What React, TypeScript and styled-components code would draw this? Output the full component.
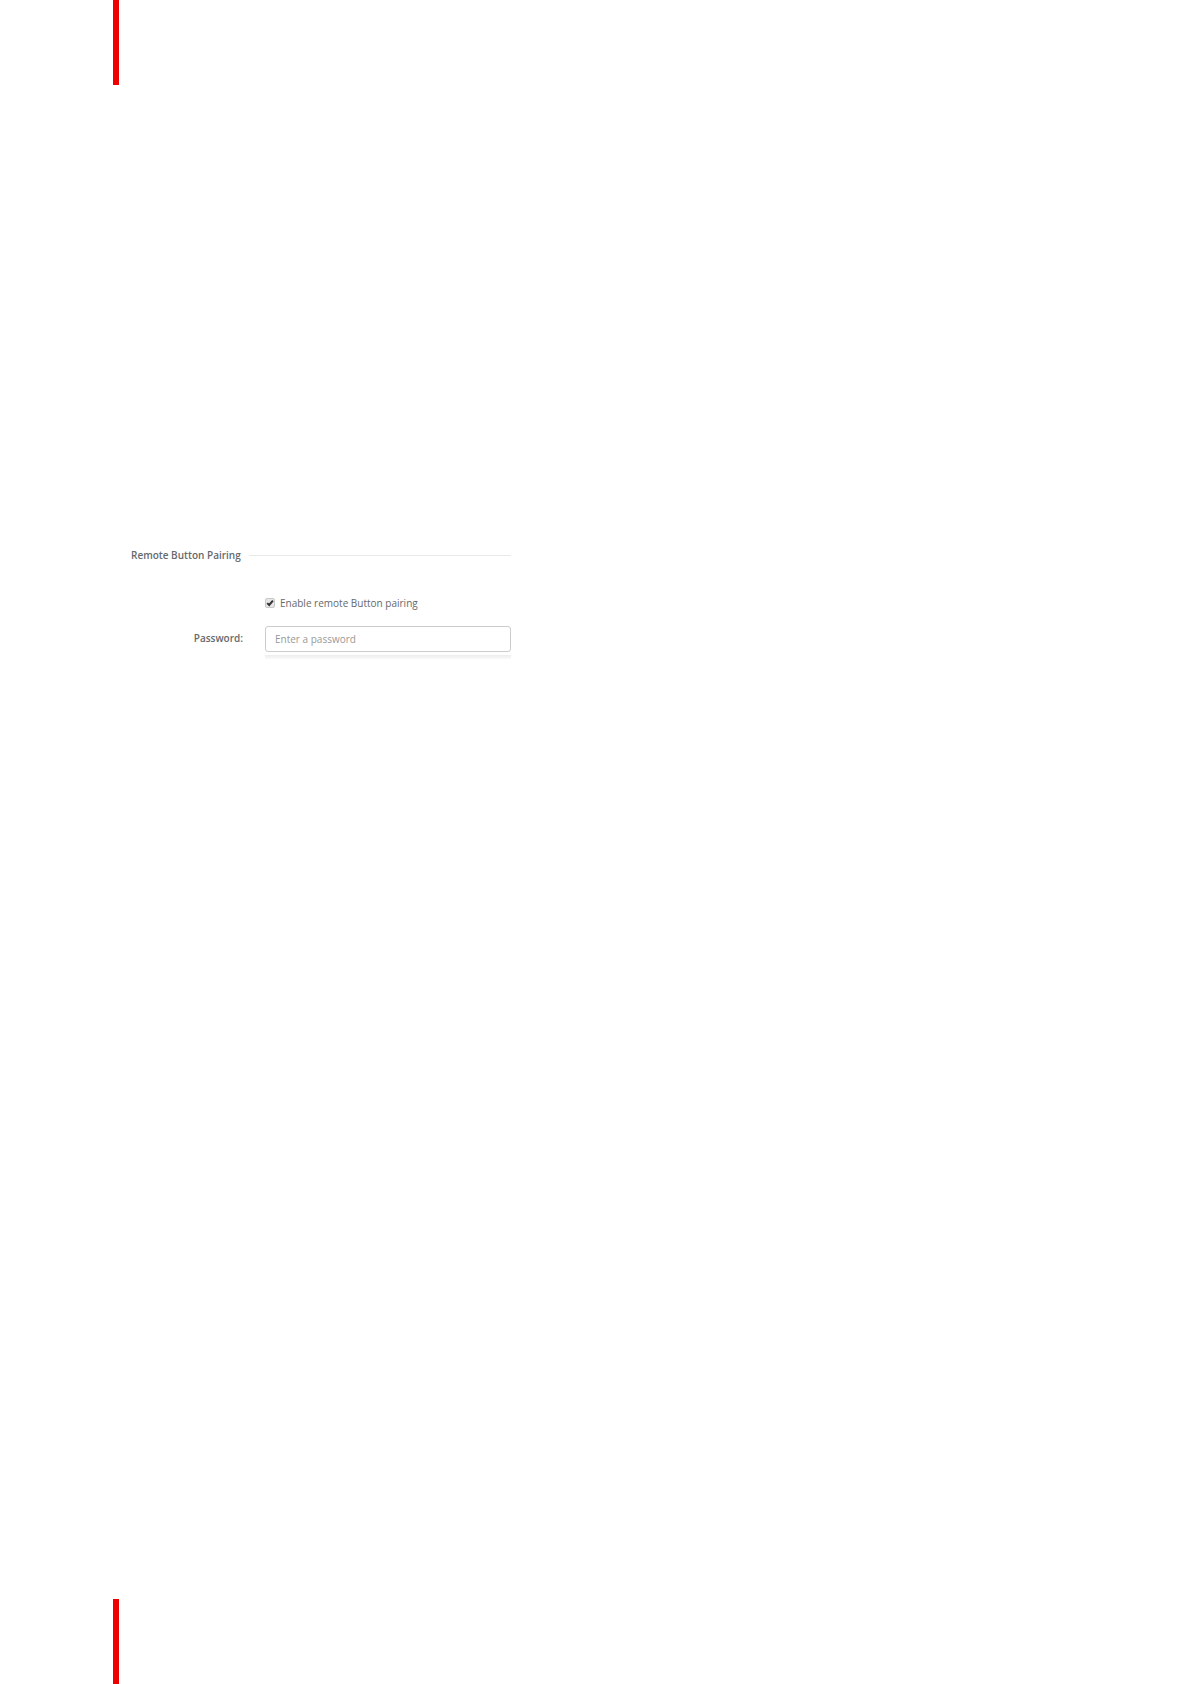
import React, { useState } from "react";
import styled, { createGlobalStyle } from "styled-components";

const GlobalStyle = createGlobalStyle`
  *, *::before, *::after { box-sizing: border-box; }
  body {
    margin: 0;
    background: #fff;
    font-family: "Open Sans", "Noto Sans", sans-serif;
    font-size: 10px;
    line-height: 14px;
    color: #66696c;
  }
`;

const Page = styled.div`
  min-height: 100vh;
  padding-left: 113px;
  display: flex;
  flex-direction: column;
`;

const Accent = styled.div`
  width: 6px;
  height: 85px;
  flex: none;
  background: #ee0000;
`;

const Content = styled.main`
  flex: 1;
  padding: 463px 18px 0;
`;

const Form = styled.form`
  width: 100%;
  max-width: 380px;
`;

const SectionHeader = styled.div`
  display: flex;
  align-items: center;
  gap: 8px;
  margin-bottom: 34px;

  &::after {
    content: "";
    flex: 1;
    height: 1px;
    background: #eaeaea;
  }
`;

const Title = styled.h2`
  margin: 0;
  font-size: inherit;
  font-weight: 600;
`;

const Fields = styled.div`
  display: grid;
  grid-template-columns: 112px 1fr;
  column-gap: 22px;
  row-gap: 16px;
`;

const CheckLabel = styled.label`
  grid-column: 2;
  display: flex;
  align-items: center;
  gap: 5px;
`;

const CheckBox = styled.span`
  display: grid;
  width: 10px;
  height: 10px;

  > * { grid-area: 1 / 1; }
`;

const CheckInput = styled.input`
  appearance: none;
  width: 10px;
  height: 10px;
  margin: 0;
  border: 1px solid #c8c8c8;
  border-radius: 2px;
  background: #e6e6e6;
`;

const CheckMark = styled.svg`
  width: 10px;
  height: 10px;
  pointer-events: none;
`;

const FieldLabel = styled.label`
  text-align: right;
  font-weight: 600;
  line-height: 24px;
`;

const PasswordInput = styled.input`
  display: block;
  width: 100%;
  height: 26px;
  padding: 0 9px;
  border: 1px solid #ccc;
  border-radius: 3px;
  background: #fff;
  font: inherit;
  color: inherit;

  &::placeholder { color: #999; opacity: 1; }
`;

const StrengthTrack = styled.div`
  height: 4px;
  margin-top: 3px;
  background: linear-gradient(#ececec, #fafafa);
`;

export default function App() {
  const [enabled, setEnabled] = useState(true);
  const [password, setPassword] = useState("");

  return (
    <>
      <GlobalStyle />
      <Page>
        <Accent />
        <Content>
          <Form onSubmit={(event) => event.preventDefault()}>
            <SectionHeader>
              <Title>Remote Button Pairing</Title>
            </SectionHeader>
            <Fields>
              <CheckLabel htmlFor="remote-pairing">
                <CheckBox>
                  <CheckInput
                    id="remote-pairing"
                    type="checkbox"
                    checked={enabled}
                    onChange={(event) => setEnabled(event.target.checked)}
                  />
                  {enabled && (
                    <CheckMark viewBox="0 0 10 10" aria-hidden="true">
                      <path d="M2.2 5.1 4.2 7 7.9 2.6" fill="none" stroke="#333" strokeWidth="2" />
                    </CheckMark>
                  )}
                </CheckBox>
                Enable remote Button pairing
              </CheckLabel>
              <FieldLabel htmlFor="password">Password:</FieldLabel>
              <div>
                <PasswordInput
                  id="password"
                  type="password"
                  placeholder="Enter a password"
                  value={password}
                  onChange={(event) => setPassword(event.target.value)}
                />
                <StrengthTrack />
              </div>
            </Fields>
          </Form>
        </Content>
        <Accent />
      </Page>
    </>
  );
}
